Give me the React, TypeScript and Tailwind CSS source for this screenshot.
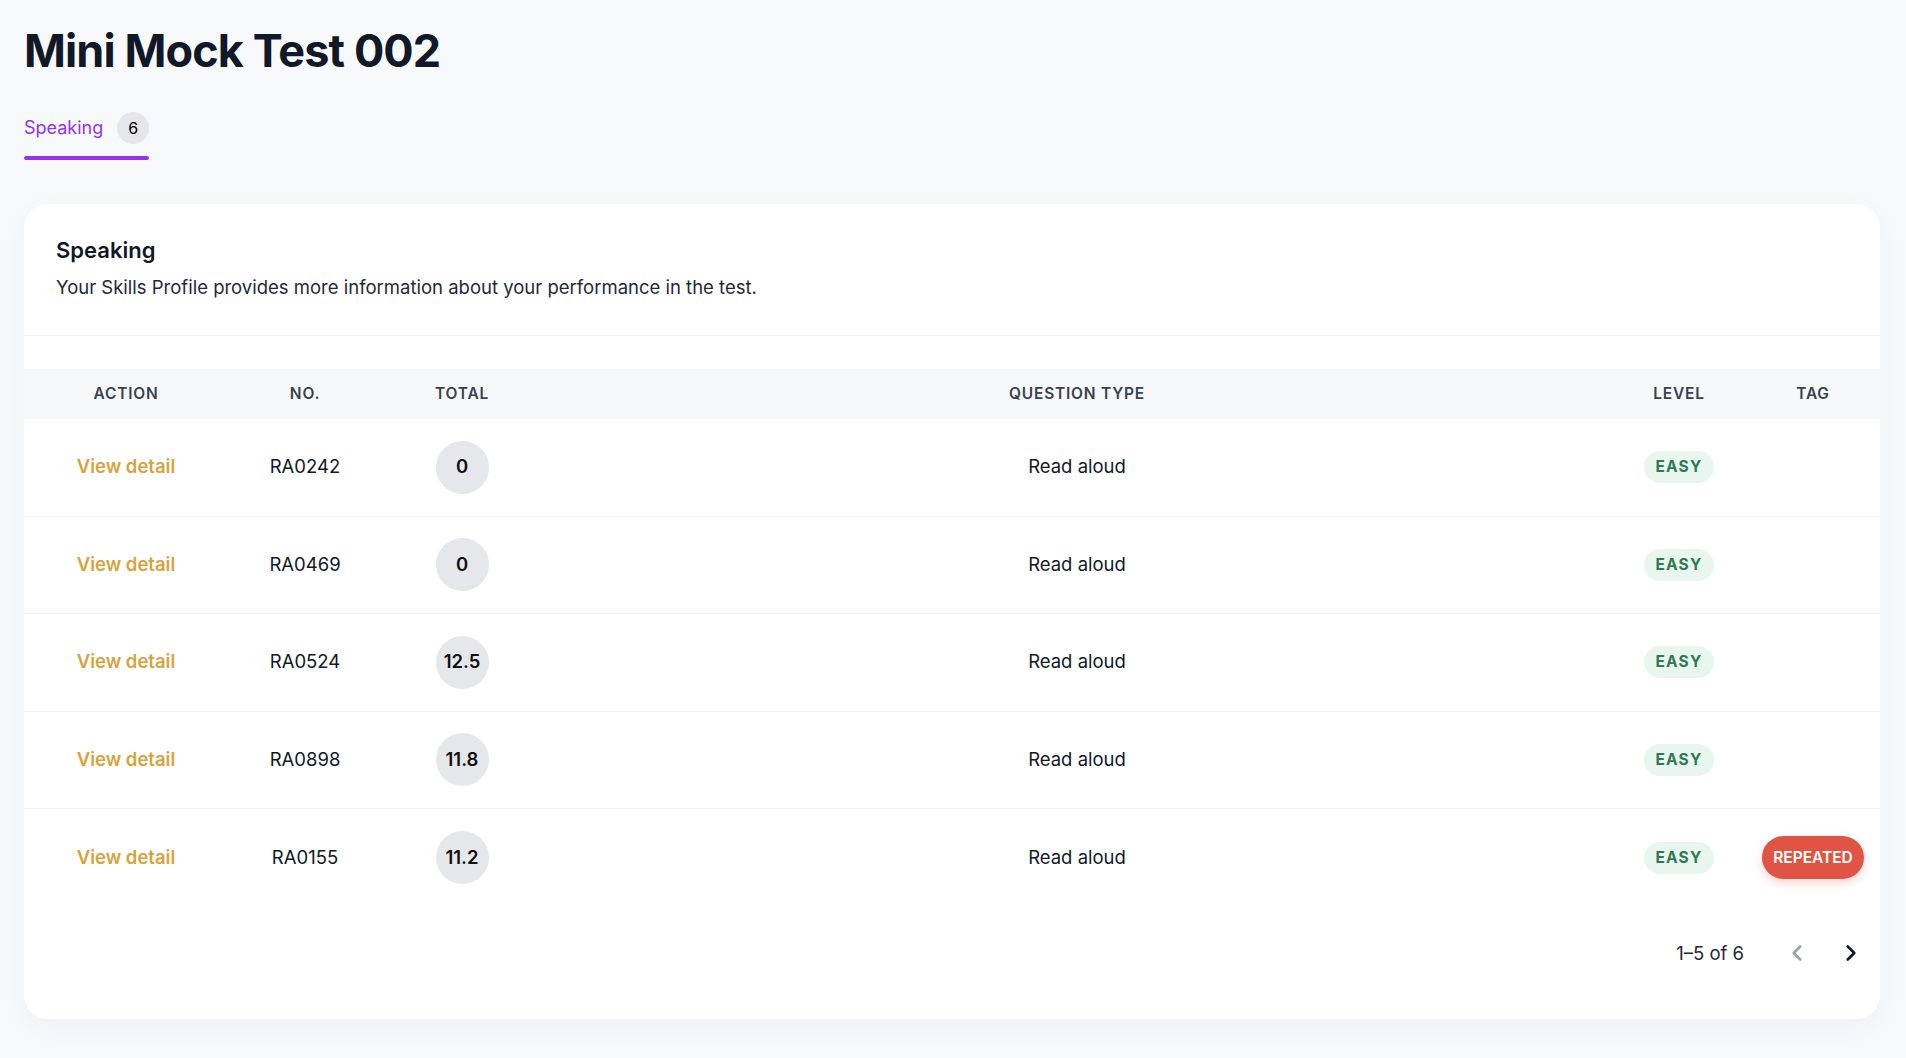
import { ChevronLeft, ChevronRight } from 'lucide-react';

type Row = { no: string; total: string; type: string; level: string; tag?: string };

const rows: Row[] = [
  { no: 'RA0242', total: '0', type: 'Read aloud', level: 'EASY' },
  { no: 'RA0469', total: '0', type: 'Read aloud', level: 'EASY' },
  { no: 'RA0524', total: '12.5', type: 'Read aloud', level: 'EASY' },
  { no: 'RA0898', total: '11.8', type: 'Read aloud', level: 'EASY' },
  { no: 'RA0155', total: '11.2', type: 'Read aloud', level: 'EASY', tag: 'REPEATED' },
];

const cols = 'grid grid-cols-[204px_154px_160px_1fr_134px_134px] items-center text-center';

export default function App() {
  return (
    <div
      className="min-h-screen bg-[#f8f9fb] pl-6 pr-[26px] pt-7 pb-10 text-[#111827]"
      style={{ fontFamily: 'Inter, "Noto Sans", sans-serif' }}
    >
      <h1 className="text-[45px] font-bold leading-none tracking-[-0.02em] text-[#111827]">Mini Mock Test 002</h1>

      <div className="mt-[39px] flex">
        <div className="flex flex-col">
          <div className="flex items-center gap-[14px] pb-3">
            <span className="text-[18px] leading-none text-[#9333ea]">Speaking</span>
            <span className="flex h-8 w-8 items-center justify-center rounded-full bg-[#e5e7eb] text-[16px] text-black">6</span>
          </div>
          <div className="h-1 rounded-sm bg-[#9333ea]" />
        </div>
      </div>

      <div className="mt-11 rounded-3xl bg-white shadow-[0_8px_30px_rgba(17,24,39,0.04)]">
        <div className="px-8 pt-8 pb-[34px] border-b border-[#f1f2f4]">
          <h2 className="text-[22px] font-semibold leading-7 text-[#111827]">Speaking</h2>
          <p className="mt-[9px] text-[18.5px] leading-7 text-[#1f2937]">
            Your Skills Profile provides more information about your performance in the test.
          </p>
        </div>

        <div className="pt-[33px]">
          <div className={`${cols} h-[50px] bg-[#f7f8fa] text-[15.5px] font-semibold tracking-[0.05em] text-[#374151]`}>
            <div>ACTION</div>
            <div>NO.</div>
            <div>TOTAL</div>
            <div>QUESTION TYPE</div>
            <div>LEVEL</div>
            <div>TAG</div>
          </div>

          {rows.map((r, i) => (
            <div
              key={r.no}
              className={`${cols} h-[97.5px] text-[18.5px] ${i < rows.length - 1 ? 'border-b border-[#f1f2f4]' : ''}`}
            >
              <div>
                <a className="font-semibold text-[#d8a33d] cursor-pointer">View detail</a>
              </div>
              <div className="text-[#111827]">{r.no}</div>
              <div className="flex justify-center">
                <span className="flex h-[53px] w-[53px] items-center justify-center rounded-full bg-[#e5e7eb] font-semibold text-[#111]">
                  {r.total}
                </span>
              </div>
              <div className="text-[#111827]">{r.type}</div>
              <div className="flex justify-center">
                <span className="rounded-full bg-[#e8f6ee] px-[11px] py-[5px] text-[15.5px] font-bold leading-[22px] tracking-[0.08em] text-[#2f7a55]">
                  {r.level}
                </span>
              </div>
              <div className="flex justify-center">
                {r.tag && (
                  <span className="rounded-full bg-[#e05444] px-[11px] py-[10px] text-[15.5px] font-semibold leading-[23px] text-white shadow-[0_4px_10px_rgba(224,84,68,0.25)]">
                    {r.tag}
                  </span>
                )}
              </div>
            </div>
          ))}
        </div>

        <div className="flex items-center justify-end pt-[26px] pb-[46px] pr-[9px]">
          <span className="text-[18.5px] leading-10 text-[#1f2937]">1–5 of 6</span>
          <button className="ml-[33px] flex h-10 w-10 items-center justify-center text-[#9ca3af]">
            <ChevronLeft size={26} strokeWidth={2.5} />
          </button>
          <button className="ml-[14px] flex h-10 w-10 items-center justify-center text-[#111827]">
            <ChevronRight size={26} strokeWidth={2.5} />
          </button>
        </div>
      </div>
    </div>
  );
}
